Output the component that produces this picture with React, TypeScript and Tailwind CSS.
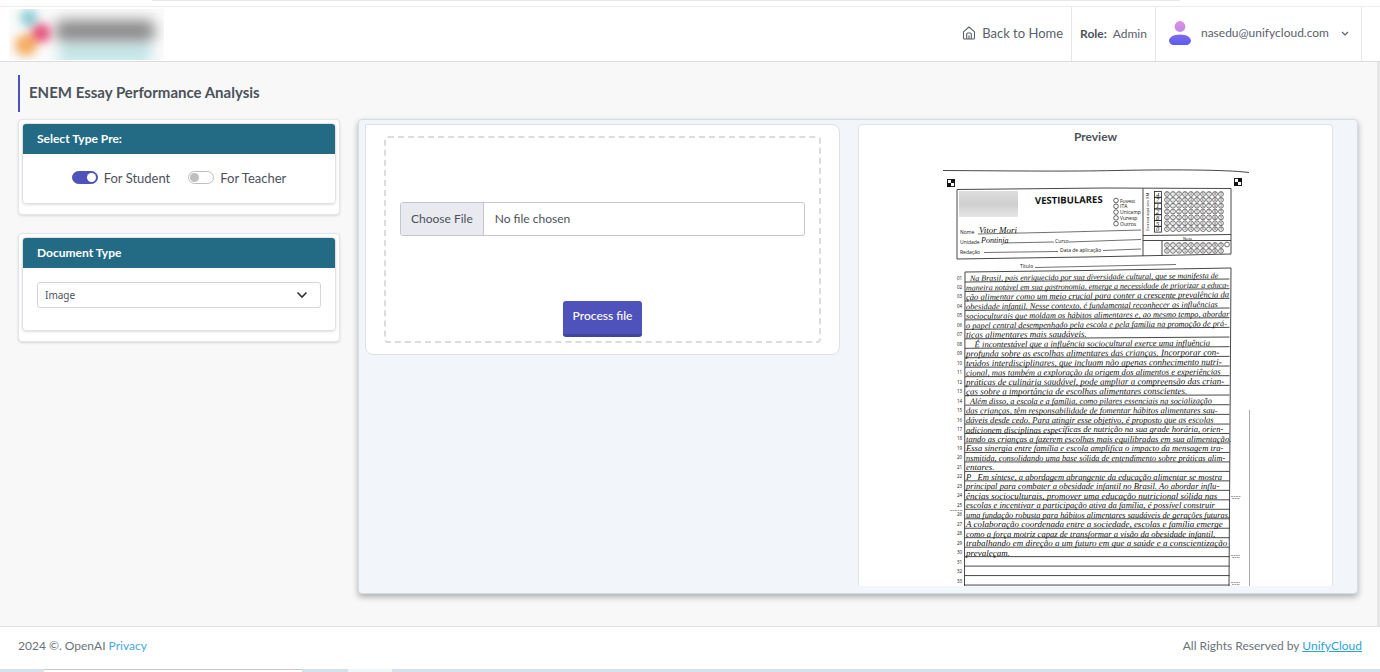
import React, { useState } from 'react';

const essay: string[] = [
  '  Na Brasil, país enriquecido por sua diversidade cultural, que se manifesta de',
  'maneira notável em sua gastronomia, emerge a necessidade de priorizar a educa-',
  'ção alimentar como um meio crucial para conter a crescente prevalência da',
  'obesidade infantil. Nesse contexto, é fundamental reconhecer as influências',
  'socioculturais que moldam os hábitos alimentares e, ao mesmo tempo, abordar',
  'o papel central desempenhado pela escola e pela família na promoção de prá-',
  'ticas alimentares mais saudáveis.',
  '    É incontestável que a influência sociocultural exerce uma influência',
  'profunda sobre as escolhas alimentares das crianças. Incorporar con-',
  'teúdos interdisciplinares, que incluam não apenas conhecimento nutri-',
  'cional, mas também a exploração da origem dos alimentos e experiências',
  'práticas de culinária saudável, pode ampliar a compreensão das crian-',
  'ças sobre a importância de escolhas alimentares conscientes.',
  '  Além disso, a escola e a família, como pilares essenciais na socialização',
  'das crianças, têm responsabilidade de fomentar hábitos alimentares sau-',
  'dáveis desde cedo. Para atingir esse objetivo, é proposto que as escolas',
  'adicionem disciplinas específicas de nutrição na sua grade horária, orien-',
  'tando as crianças a fazerem escolhas mais equilibradas em sua alimentação.',
  'Essa sinergia entre família e escola amplifica o impacto da mensagem tra-',
  'nsmitida, consolidando uma base sólida de entendimento sobre práticas alim-',
  'entares.',
  'P   Em síntese, a abordagem abrangente da educação alimentar se mostra',
  'principal para combater a obesidade infantil no Brasil. Ao abordar influ-',
  'ências socioculturais, promover uma educação nutricional sólida nas',
  'escolas e incentivar a participação ativa da família, é possível construir',
  'uma fundação robusta para hábitos alimentares saudáveis de gerações futuras.',
  'A colaboração coordenada entre a sociedade, escolas e família emerge',
  'como a força motriz capaz de transformar a visão da obesidade infantil,',
  'trabalhando em direção a um futuro em que a saúde e a conscientização',
  'prevaleçam.',
  '',
  '',
  '',
];

const exams = ['Fuvest', 'ITA', 'Unicamp', 'Vunesp', 'Outros'];
const studentId = ['4', '7', '1', '2', '8', '5', '0'];
const digits = [0, 1, 2, 3, 4, 5, 6, 7, 8, 9];

// The writer's hand gets smaller as a line fills up.
function penSize(line: string) {
  if (line.length > 77) return 8;
  if (line.length > 74) return 8.3;
  if (line.length > 69) return 8.6;
  return 9;
}

function Logo() {
  return (
    <svg className="h-[51px] w-[155px]" viewBox="0 0 155 51" role="img" aria-label="Logo">
      <defs>
        <filter id="logo-blur" x="-30%" y="-60%" width="160%" height="220%">
          <feGaussianBlur stdDeviation="7" />
        </filter>
        <filter id="mark-blur" x="-60%" y="-60%" width="220%" height="220%">
          <feGaussianBlur stdDeviation="5" />
        </filter>
      </defs>
      <rect width="155" height="51" fill="#fbfbfb" />
      <g filter="url(#logo-blur)">
        <rect x="50" y="38" width="92" height="16" fill="#b9e2e5" />
        <rect x="46" y="11" width="100" height="22" rx="8" fill="#8a8a8a" />
      </g>
      <g filter="url(#mark-blur)">
        <circle cx="20" cy="9" r="9" fill="#8ccdd5" />
        <circle cx="17" cy="36" r="11" fill="#f5ae62" />
        <circle cx="32" cy="24" r="10" fill="#e6557f" />
      </g>
    </svg>
  );
}

function Avatar() {
  return (
    <svg className="h-6 w-[22px]" viewBox="0 0 22 24" aria-hidden="true">
      <defs>
        <linearGradient id="avatar-fill" x1="0" y1="0" x2="0" y2="24" gradientUnits="userSpaceOnUse">
          <stop offset="0" stopColor="#df8fe0" />
          <stop offset="0.42" stopColor="#c18bea" />
          <stop offset="0.6" stopColor="#7f68ec" />
          <stop offset="1" stopColor="#5a5cf0" />
        </linearGradient>
      </defs>
      <circle cx="11" cy="5.5" r="5.4" fill="url(#avatar-fill)" />
      <path d="M11 13.5c6.4 0 11 2.800 11 6.200 0 1.900-1.500 3.300-3.600 4.300H3.600C1.500 23 0 21.600 0 19.700c0-3.400 4.600-6.200 11-6.200z" fill="url(#avatar-fill)" />
    </svg>
  );
}

function Marker({ x, y }: { x: number; y: number }) {
  return (
    <g transform={`translate(${x} ${y})`}>
      <rect x="0.500" y="0.500" width="7" height="7" fill="#fff" stroke="#222" />
      <rect x="4" y="0" width="4" height="4" fill="#111" />
      <rect x="0" y="4" width="4" height="4" fill="#111" />
    </g>
  );
}

function Bubbles({ x, y, rows }: { x: number; y: number; rows: number }) {
  return (
    <g>
      {Array.from({ length: rows }, (_, r) =>
        digits.map((d) => (
          <g key={`${r}-${d}`}>
            <circle cx={x + d * 6} cy={y + r * 5.85} r="2.400" fill="none" stroke="#333" strokeWidth="0.700" />
            <text x={x + d * 6} y={y + r * 5.85 + 1.3} textAnchor="middle" fontSize="3.500" fill="#333">
              {d}
            </text>
          </g>
        )),
      )}
    </g>
  );
}

function Sheet() {
  const pitch = 9.47;
  return (
    <svg className="h-[426px] w-80 font-['Open_Sans',sans-serif]" viewBox="0 0 320 426" role="img" aria-label="Essay sheet">
      <defs>
        <linearGradient id="stamp" x1="0" y1="0" x2="0" y2="1">
          <stop offset="0" stopColor="#dedede" />
          <stop offset="0.5" stopColor="#cfcfcf" />
          <stop offset="1" stopColor="#e6e6e6" />
        </linearGradient>
      </defs>
      <path d="M7 10.500C90 11 130 11.500 180 10.500S290 9.500 313 12.500" fill="none" stroke="#333" strokeWidth="0.900" />
      <Marker x={11} y={19} />
      <Marker x={298} y={18} />

      <g fill="none" stroke="#333" strokeWidth="0.900">
        <path d="M21 29.500 170 28 295 28.500V94L150 97 21 99Z" />
        <path d="M207 28.500V96M207 75.500 295 74.500M207 80.500H295M226 80.500V95" />
        <path d="M42 74 130 72 205 70M68 83 118 82M133 82 205 79.500M48 92.500 122 91.500M167 90.500 205 89M99 107.500 240 104.500" strokeWidth="0.700" />
      </g>
      <rect x="23" y="31" width="59" height="26" fill="url(#stamp)" />
      <text x="99" y="44" fontSize="9.500" fontWeight="700" fill="#111" transform="rotate(-1 99 44)">VESTIBULARES</text>
      {exams.map((name, i) => (
        <g key={name}>
          <circle cx="180" cy={40.5 + i * 5.8} r="2.300" fill="none" stroke="#222" strokeWidth="0.700" />
          <text x="184" y={42.5 + i * 5.8} fontSize="5" fill="#111">{name}</text>
        </g>
      ))}
      <g fontSize="5" fill="#111">
        <text x="24" y="74">Nome</text>
        <text x="24" y="84">Unidade</text>
        <text x="24" y="93.500">Redação</text>
        <text x="119" y="82.500">Curso</text>
        <text x="124" y="92">Data de aplicação</text>
        <text x="84" y="108">Título</text>
        <text x="247" y="79.500" fontSize="4">Nota</text>
        <text x="213" y="71" fontSize="4" transform="rotate(-90 213 71)">Escreva aqui seu RM</text>
      </g>
      <g fontFamily="'Liberation Serif', serif" fontStyle="italic" fill="#111">
        <text x="43" y="73" fontSize="9">Vitor  Mori</text>
        <text x="45" y="83" fontSize="8">Pontinja</text>
        {studentId.map((d, i) => (
          <g key={i}>
            <rect x="218.500" y={31.5 + i * 5.8} width="7" height="5.800" fill="none" stroke="#222" strokeWidth="0.800" />
            <text x="220" y={36.5 + i * 5.8} fontSize="6.500">{d}</text>
          </g>
        ))}
      </g>
      <Bubbles x={231} y={34} rows={7} />
      <Bubbles x={231} y={85} rows={2} />
      <circle cx="291" cy="84.500" r="2.400" fill="none" stroke="#333" strokeWidth="0.700" />

      <g fill="none" stroke="#333" strokeWidth="0.900">
        <path d="M29 112 150 110.500 295 108M29 112 28.500 426M295 108 293 426" />
        {essay.map((_, i) => {
          const y = 122 + i * pitch;
          const lift = Math.max(0, 3 - i * 0.2);
          return <path key={i} d={`M29 ${y} 160 ${y - lift / 2} 293.500 ${y - lift}`} />;
        })}
      </g>
      {essay.map((line, i) => {
        const y = 121 + i * pitch;
        const tilt = -Math.max(0, 0.65 - i * 0.04);
        return (
          <g key={i}>
            <text x="21" y={y - 1.5} fontSize="4.500" fill="#111">
              {String(i + 1).padStart(2, '0')}
            </text>
            <text
              x="30"
              y={y}
              fontSize={penSize(line)}
              fontFamily="'Liberation Serif', serif"
              fontStyle="italic"
              fill="#111"
              transform={`rotate(${tilt} 30 ${y})`}
              style={{ whiteSpace: 'pre' }}
            >
              {line}
            </text>
          </g>
        );
      })}
      <path d="M313.500 250V426" stroke="#888" strokeWidth="0.700" />
      <g stroke="#666" strokeWidth="0.600">
        <path d="M295 336.500h10M296 338.500h8M295 395.500h9M296 397.500h8M295 422.500h9M296 424.500h8M14 350.500h13" strokeDasharray="2 0.500" />
      </g>
    </svg>
  );
}

function SideCard({ title, children }: { title: string; children: React.ReactNode }) {
  return (
    <section className="rounded-sm border border-[#e3e5e8] bg-white px-[3px] pt-[3px] pb-[10px] shadow-sm">
      <div className="overflow-hidden rounded border border-[#dfe2e4] shadow-sm">
        <h2 className="bg-[#236b84] px-[14px] py-[5px] text-[12px] leading-5 font-bold text-white">{title}</h2>
        {children}
      </div>
    </section>
  );
}

const switchClass =
  "relative h-[13px] w-[26px] cursor-pointer appearance-none rounded-full border border-[#bfbfbf] bg-white before:absolute before:top-px before:left-px before:size-[9px] before:rounded-full before:bg-[#bfbfbf] before:content-[''] checked:border-[#4f52ba] checked:bg-[#4f52ba] checked:before:left-[14px] checked:before:bg-white";

export default function App() {
  const [audience, setAudience] = useState<'student' | 'teacher'>('student');

  return (
    <div className="flex min-h-screen flex-col bg-[#f8f8f8] font-['Lato',sans-serif] text-[12px] leading-5 text-[#4c525a]">
      <div className="h-[6px] bg-white pr-[200px] pl-[152px]">
        <div className="h-px bg-[#e8e8e8]" />
      </div>
      <header className="flex h-14 items-stretch justify-between border-t border-b border-t-[#ececec] border-b-[#dcdcdc] bg-white pr-[18px] pl-[9px]">
        <a href="#" className="flex items-center">
          <Logo />
        </a>
        <nav className="flex items-stretch divide-x divide-[#e5e7ea] border-r border-[#e5e7ea] text-[#5a616a]">
          <a href="#" className="flex items-center gap-[6px] pr-2 pb-[2px] text-[13px]">
            <svg className="size-[14px]" viewBox="0 0 14 14" fill="none" stroke="currentColor" strokeWidth="1.100" strokeLinejoin="round" aria-hidden="true">
              <path d="M1.500 5.800 7 1l5.500 4.800v6.200a1 1 0 0 1-1 1h-9a1 1 0 0 1-1-1z" />
              <path d="M4.700 13V8a1 1 0 0 1 1-1h2.600a1 1 0 0 1 1 1v5M7 9.500V13" />
            </svg>
            Back to Home
          </a>
          <div className="flex items-center gap-[6px] px-2">
            <b className="text-[#4c525a]">Role:</b>
            <span>Admin</span>
          </div>
          <button type="button" className="flex cursor-pointer items-center gap-[10px] pr-3 pb-[2px] pl-[13px]">
            <Avatar />
            <span>nasedu@unifycloud.com</span>
            <svg className="ml-[2px] h-[9px] w-2" viewBox="0 0 8 9" fill="none" stroke="currentColor" strokeWidth="1.200" aria-hidden="true">
              <path d="m1 3 3 3 3-3" />
            </svg>
          </button>
        </nav>
      </header>

      <main className="flex-1 border-r-[3px] border-[#e6e6e6] pt-[13px] pr-[19px] pb-8 pl-[18px]">
        <h1 className="mb-[7px] border-l-2 border-[#4f52ba] pt-[7px] pb-[9px] pl-[9px] text-[15px] leading-[21px] font-bold text-[#4c525a]">
          ENEM Essay Performance Analysis
        </h1>

        <div className="grid grid-cols-[322px_minmax(0,1fr)] gap-[18px]">
          <aside className="flex flex-col gap-[18px]">
            <SideCard title="Select Type Pre:">
              <div className="flex h-[49px] items-center justify-center gap-[18px] pb-[2px] text-[13px]">
                <label className="flex items-center gap-[6px]">
                  <input type="checkbox" role="switch" className={switchClass} checked={audience === 'student'} onChange={() => setAudience('student')} />
                  For Student
                </label>
                <label className="flex items-center gap-[6px]">
                  <input type="checkbox" role="switch" className={switchClass} checked={audience === 'teacher'} onChange={() => setAudience('teacher')} />
                  For Teacher
                </label>
              </div>
            </SideCard>
            <SideCard title="Document Type">
              <div className="grid px-[14px] pt-[14px] pb-[22px]">
                <select aria-label="Document Type" className="col-start-1 row-start-1 h-[26px] w-full appearance-none rounded-[3px] border border-[#d3d6da] bg-white px-[7px] font-['Noto_Sans',sans-serif] text-[10px] leading-4" defaultValue="Image">
                  <option>Image</option>
                  <option>PDF</option>
                </select>
                <svg className="pointer-events-none col-start-1 row-start-1 mr-[13px] h-[10px] w-3 self-center justify-self-end" viewBox="0 0 12 10" fill="none" stroke="#30343a" strokeWidth="1.600" aria-hidden="true">
                  <path d="m1.500 2.500 4.500 4.500 4.500-4.500" />
                </svg>
              </div>
            </SideCard>
          </aside>

          <div className="grid grid-cols-2 gap-[18px] rounded border border-[#d5dde3] bg-[#f2f6fa] pt-1 pr-6 pb-[7px] pl-[6px] shadow-[0_3px_6px_rgba(0,0,0,0.3)]">
            <form className="self-start rounded-tr-lg rounded-b-lg border border-[#dde1e6] bg-white px-[18px] pt-[11px] pb-[11px]" onSubmit={(e) => e.preventDefault()}>
              <div className="flex flex-col items-center rounded border-2 border-dashed border-[#dcdcdc] px-[14px] pt-16 pb-1">
                <input
                  type="file"
                  aria-label="Essay file"
                  className="h-[34px] w-full rounded-[3px] border border-[#c3c5ca] bg-white text-[12px] leading-5 file:mr-[11px] file:h-8 file:border-0 file:border-r file:border-solid file:border-[#c3c5ca] file:bg-[#e9e9f0] file:px-[10px] file:text-[12px] file:text-[#4c525a]"
                />
                <button type="submit" className="mt-[65px] h-9 cursor-pointer rounded-[3px] border-b-[3px] border-[#43459c] bg-[#4f52ba] px-[10px] pb-1 font-medium text-white">
                  Process file
                </button>
              </div>
            </form>

            <section className="flex flex-col items-center rounded-t border border-b-0 border-[#dde3e8] bg-white">
              <h2 className="mt-[2px] mb-[13px] text-[12px] leading-5 font-bold">Preview</h2>
              <Sheet />
            </section>
          </div>
        </div>
      </main>

      <footer className="flex h-[43px] items-center justify-between border-t border-[#e2e2e2] bg-white px-[18px] pb-1 text-[#6c737b]">
        <p>
          2024 ©. OpenAI <a href="#" className="text-[#45a9dc]">Privacy</a>
        </p>
        <p>
          All Rights Reserved by <a href="#" className="text-[#2ea3d6] underline">UnifyCloud</a>
        </p>
      </footer>
      <div className="flex h-[3px] bg-[#d5e1e8]">
        <div className="ml-11 w-[258px] border-t border-[#c8c8c8] bg-white" />
        <div className="ml-[46px] w-11 bg-[#eef6f7]" />
      </div>
    </div>
  );
}
